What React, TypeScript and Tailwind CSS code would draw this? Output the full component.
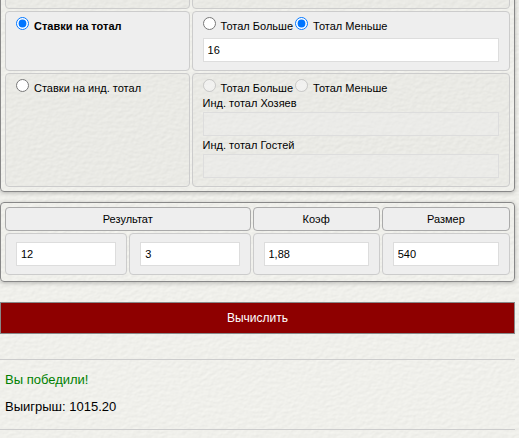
import type { InputHTMLAttributes, ReactNode } from 'react';

const tableClass =
  'w-full table-fixed border-separate border-spacing-[2px] rounded border border-[#888] px-[2px] pt-[2px] shadow-[0_1px_4px_rgba(0,0,0,0.25)]';
const cellClass = 'rounded border border-[#ccc] px-[10px] pb-2 align-top';
const headClass = 'h-6 rounded border border-[#aaa] bg-[#eee] p-0 text-center font-normal';

function PaperTexture() {
  return (
    <svg className="absolute inset-0 -z-10 h-full w-full" aria-hidden="true">
      <filter id="paper" x="0" y="0" width="100%" height="100%" colorInterpolationFilters="sRGB">
        <feTurbulence type="fractalNoise" baseFrequency="0.2 0.3" numOctaves="3" seed="8" result="grain" />
        <feDiffuseLighting in="grain" surfaceScale="0.16" diffuseConstant="1" lightingColor="#fffffa">
          <feDistantLight azimuth="235" elevation="70" />
        </feDiffuseLighting>
      </filter>
      <rect width="100%" height="100%" filter="url(#paper)" />
    </svg>
  );
}

type RadioProps = InputHTMLAttributes<HTMLInputElement> & { children: ReactNode };

function Radio({ children, ...props }: RadioProps) {
  return (
    <label className="flex h-[17px] items-start gap-[5px] whitespace-nowrap">
      <input type="radio" className="size-[13px] shrink-0" {...props} />
      <span className="pt-[2px]">{children}</span>
    </label>
  );
}

function Field({ className = '', ...props }: InputHTMLAttributes<HTMLInputElement>) {
  return (
    <input
      type="text"
      className={`block h-6 w-full border border-[#ddd] bg-white px-1 text-[11px] disabled:bg-[#eee]/40 ${className}`}
      {...props}
    />
  );
}

export default function App() {
  return (
    <div className="relative isolate min-h-screen overflow-hidden bg-[#f0f0eb] pr-1 font-['Liberation_Sans',Arial,sans-serif] text-[11px] leading-[14px] text-black">
      <PaperTexture />

      <table className={`-mt-5 pb-[2px] ${tableClass}`}>
        <colgroup>
          <col className="w-[36.7%]" />
          <col />
        </colgroup>
        <tbody>
          <tr className="h-6">
            <td className="rounded border border-[#ccc] bg-black/[0.025] p-0" />
            <td className="rounded border border-[#ccc] bg-black/[0.025] p-0" />
          </tr>
          <tr>
            <td className={`bg-[#eee] pt-[5px] font-bold ${cellClass}`}>
              <Radio name="bet" defaultChecked>Ставки на тотал</Radio>
            </td>
            <td className={`bg-[#eee] pt-[5px] ${cellClass}`}>
              <div className="flex gap-[2px]">
                <Radio name="total">Тотал Больше</Radio>
                <Radio name="total" defaultChecked>Тотал Меньше</Radio>
              </div>
              <Field className="mt-1" aria-label="Тотал" defaultValue="16" />
            </td>
          </tr>
          <tr>
            <td className={`bg-black/[0.025] pt-[5px] ${cellClass}`}>
              <Radio name="bet">Ставки на инд. тотал</Radio>
            </td>
            <td className={`bg-black/[0.025] pt-[5px] ${cellClass}`}>
              <div className="flex gap-[2px]">
                <Radio name="personal" disabled>Тотал Больше</Radio>
                <Radio name="personal" disabled>Тотал Меньше</Radio>
              </div>
              <div className="flex flex-col gap-[2px]">
                <label htmlFor="home">Инд. тотал Хозяев</label>
                <Field id="home" disabled />
                <label htmlFor="away">Инд. тотал Гостей</label>
                <Field id="away" disabled />
              </div>
            </td>
          </tr>
        </tbody>
      </table>

      <table className={`mt-[10px] pb-1 ${tableClass}`}>
        <colgroup>
          <col className="w-[24.5%]" />
          <col className="w-[24.3%]" />
          <col className="w-[25.5%]" />
          <col />
        </colgroup>
        <thead>
          <tr>
            <th colSpan={2} className={headClass}>Результат</th>
            <th className={headClass}>Коэф</th>
            <th className={headClass}>Размер</th>
          </tr>
        </thead>
        <tbody>
          <tr>
            <td className={`bg-[#eee] pt-2 ${cellClass}`}>
              <Field aria-label="Результат хозяев" defaultValue="12" />
            </td>
            <td className={`bg-[#eee] pt-2 ${cellClass}`}>
              <Field aria-label="Результат гостей" defaultValue="3" />
            </td>
            <td className={`bg-[#eee] pt-2 ${cellClass}`}>
              <Field aria-label="Коэф" defaultValue="1,88" />
            </td>
            <td className={`bg-[#eee] pt-2 ${cellClass}`}>
              <Field aria-label="Размер" defaultValue="540" />
            </td>
          </tr>
        </tbody>
      </table>

      <button type="button" className="mt-5 block h-8 w-full border border-[#888] bg-[#8e0000] text-[12px] text-white">
        Вычислить
      </button>

      <section className="mt-[25px] border-y border-[#ccc] px-[5px] pt-3 pb-[14px] text-[13px] leading-4">
        <p className="text-[#008000]">Вы победили!</p>
        <p className="mt-[11px]">Выигрыш: 1015.20</p>
      </section>
    </div>
  );
}
